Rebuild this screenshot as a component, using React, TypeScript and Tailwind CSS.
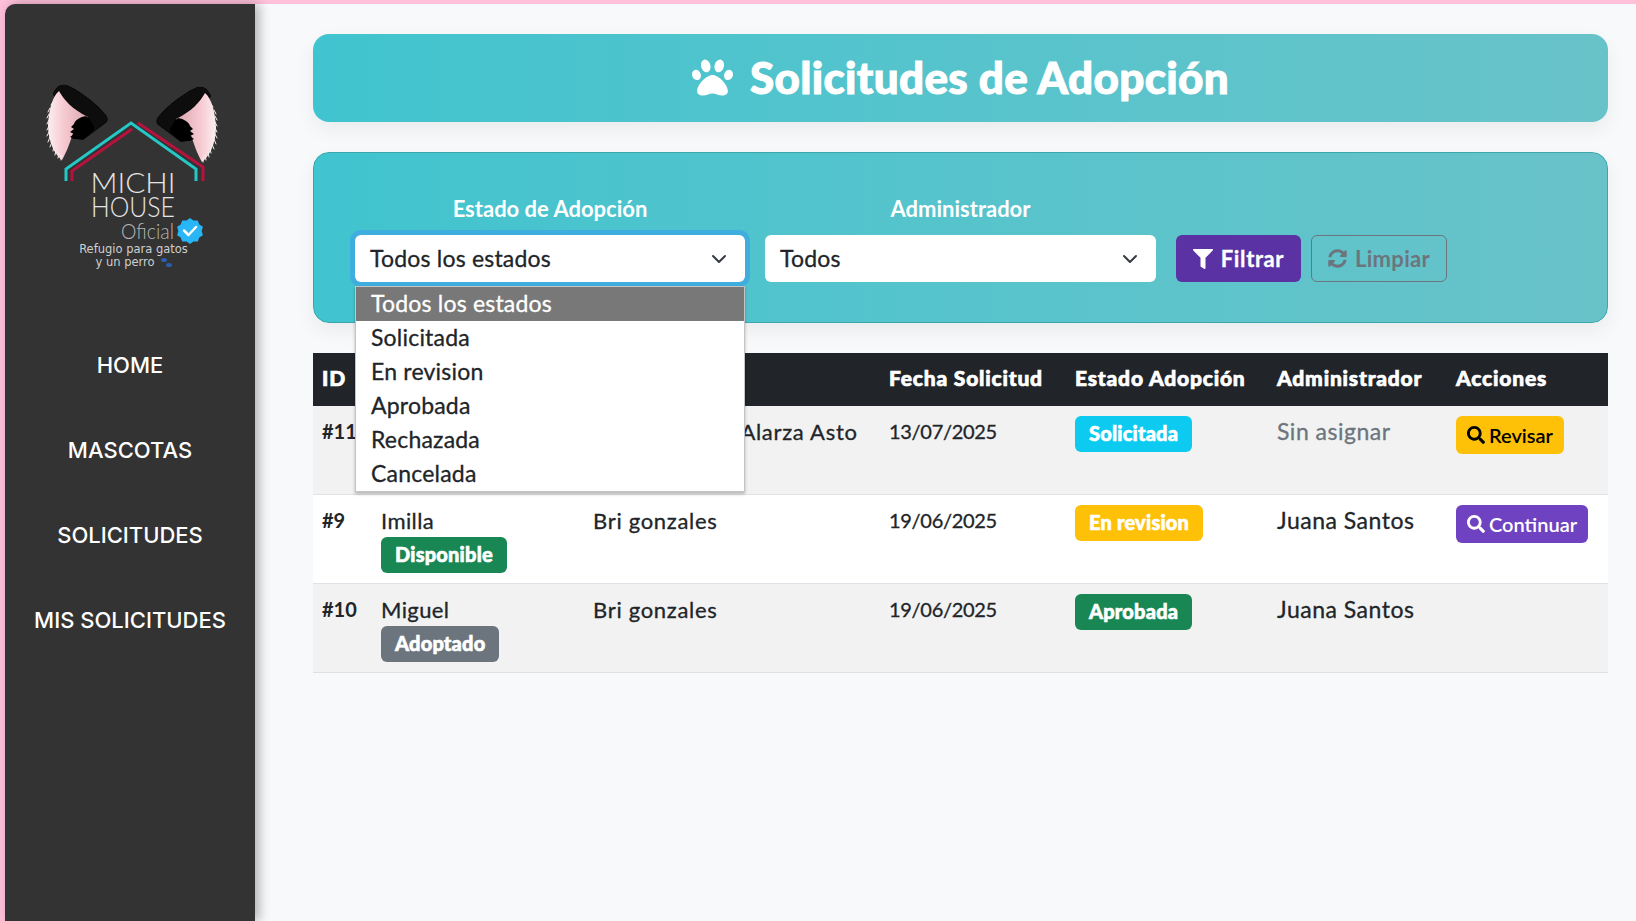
import { FaPaw, FaFilter, FaSyncAlt, FaSearch } from "react-icons/fa";

const navItems = ["HOME", "MASCOTAS", "SOLICITUDES", "MIS SOLICITUDES"];
const estados = ["Todos los estados", "Solicitada", "En revision", "Aprobada", "Rechazada", "Cancelada"];

// short hairs along the outer edge of the cat ear
const furLines = [
    [50, 108, 48, 112], [49, 114, 47, 118], [49, 120, 47, 124], [49, 126, 47, 130], [49, 132, 47, 136],
    [50, 137, 48, 142], [52, 142, 50, 147], [54, 146, 53, 151], [56, 150, 55, 155], [59, 153, 58, 158],
    [61, 155, 61, 160], [53, 102, 51, 105],
];

const Chevron = () => (
    <svg viewBox="0 0 16 16" className="w-4 h-4" fill="none" stroke="#343a40" strokeWidth="2" strokeLinecap="round" strokeLinejoin="round">
        <path d="m2 5 6 6 6-6" />
    </svg>
);

const Ear = () => (
    <g filter="url(#soft)">
        <path d="M53 94C56 86 62 83 69 86C82 92 98 105 106 115C109 119 108 122 103 125L83 140L70 138L60 110Z" fill="#070707" />
        <path d="M48 125C49 110 52 97 59 91C64 100 72 109 88 117L78 122L72 136C69 146 65 155 62 160C55 155 48 142 48 125Z" fill="url(#earPink)" />
        <g stroke="#f7f1f2" strokeWidth="1" strokeLinecap="round">
            {furLines.map(([x1, y1, x2, y2]) => (
                <line key={`${x1}-${y1}`} x1={x1} y1={y1} x2={x2} y2={y2} />
            ))}
        </g>
        <path d="M86 116C80 117 75 120 74 124L71 127L74 129L70 132L74 134L70 137L75 139L84 139L94 129C92 124 90 120 86 116Z" fill="#050505" />
    </g>
);

const Logo = () => (
    <svg viewBox="0 0 250 319" className="w-[250px] h-[319px] block" fill="none">
        <defs>
            <linearGradient id="earPink" x1="0" x2="1" y1="0" y2="0">
                <stop offset="0" stopColor="#fbeef0" />
                <stop offset="0.4" stopColor="#f6c9d0" />
                <stop offset="1" stopColor="#d9a6ae" />
            </linearGradient>
            <filter id="soft">
                <feGaussianBlur stdDeviation="0.6" />
            </filter>
        </defs>
        <g transform="translate(-5 -4)">
            <Ear />
            <g transform="translate(264 2) scale(-1 1)">
                <Ear />
            </g>
            <path d="M72 181V171L132 129" stroke="#b5123e" strokeWidth="3" />
            <path d="M138 123L203 167V181" stroke="#b5123e" strokeWidth="3" />
            <path d="M66 181V169L131 123L196 169V181" stroke="#25c8c6" strokeWidth="3" />
            <text x="133" y="193" textAnchor="middle" fill="#e5e5e5" fontSize="28" fontWeight="300" fontFamily="Lato, sans-serif" textLength="85" lengthAdjust="spacingAndGlyphs">MICHI</text>
            <text x="133" y="217" textAnchor="middle" fill="#e5e5e5" fontSize="28" fontWeight="300" fontFamily="Lato, sans-serif" textLength="84" lengthAdjust="spacingAndGlyphs">HOUSE</text>
            <text x="174" y="239" textAnchor="end" fill="#b5b5b5" fontSize="22" fontWeight="300" fontFamily="Lato, sans-serif" textLength="53" lengthAdjust="spacingAndGlyphs">Oficial</text>
            <path d="M190 218l3.5 2.6 4.3-.2 1.5 4 3.6 2.4-1.2 4.2 1.2 4.2-3.6 2.4-1.5 4-4.3-.2-3.500 2.600-3.500-2.600-4.300.2-1.500-4-3.600-2.400 1.200-4.200-1.200-4.200 3.600-2.400 1.500-4 4.300.2z" fill="#29b6f6" />
            <path d="M184 230.500l4.500 4.500 7.500-8" stroke="#fff" strokeWidth="2.500" strokeLinecap="round" strokeLinejoin="round" />
            <text x="133.500" y="253" textAnchor="middle" fill="#cfcfcf" fontSize="11.500" fontFamily="'DejaVu Sans', sans-serif">Refugio para gatos</text>
            <text x="125" y="266" fill="#cfcfcf" textAnchor="middle" fontSize="11.500" fontFamily="'DejaVu Sans', sans-serif">y un perro</text>
            <g fill="#2a5db0">
                <ellipse cx="164" cy="260" rx="3" ry="2" />
                <ellipse cx="169" cy="265" rx="3" ry="2" />
            </g>
        </g>
    </svg>
);

const Sidebar = () => (
    <aside className="w-[250px] shrink-0 bg-[#333333] rounded-tl-[10px] shadow-[4px_0_12px_rgba(0,0,0,0.3)] z-10">
        <Logo />
        <nav className="flex flex-col">
            {navItems.map((item) => (
                <a key={item} className="h-[85px] flex items-center justify-center text-white text-[22px] font-medium font-['Inter',sans-serif]">
                    {item}
                </a>
            ))}
        </nav>
    </aside>
);

const FakeSelect = ({ value, focused }: { value: string; focused?: boolean }) => (
    <div className={`h-[47px] bg-white rounded-md flex items-center justify-between pl-[15px] pr-[18px] text-[23px] tracking-[0.2px] [-webkit-text-stroke:0.3px_currentColor] text-[#212529] ${focused ? "shadow-[0_0_0_5px_#3fadde]" : ""}`}>
        <span>{value}</span>
        <Chevron />
    </div>
);

const FilterCard = () => (
    <section className="relative mt-[30px] rounded-2xl border border-[#3ba7ad] bg-gradient-to-r from-[#40c4cf] to-[#68c3c9] pt-[39px] pb-[40px] pl-[41px] shadow-[0_8px_20px_rgba(0,0,0,0.06)]">
        <div className="flex items-end">
            <div className="w-[390px] mr-[20px]">
                <label className="block text-center text-white text-[22px] font-bold mb-[10px] leading-[33px]">Estado de Adopción</label>
                <FakeSelect value="Todos los estados" focused />
            </div>
            <div className="w-[391px] mr-[20px]">
                <label className="block text-center text-white text-[22px] font-bold mb-[10px] leading-[33px]">Administrador</label>
                <FakeSelect value="Todos" />
            </div>
            <button className="h-[47px] w-[125px] mr-[10px] rounded-md bg-[#5a32a3] text-white text-[22px] font-bold tracking-[0.6px] [-webkit-text-stroke:0.3px_currentColor] flex items-center justify-center gap-2">
                <FaFilter className="text-[20px]" /> Filtrar
            </button>
            <button className="h-[47px] w-[136px] rounded-md border border-[#6c757d] text-[#6c757d] text-[22px] font-bold tracking-[0.3px] flex items-center justify-center gap-2">
                <FaSyncAlt className="text-[19px]" /> Limpiar
            </button>
        </div>

        {/* Open dropdown list lies over the card and the table */}
        <ul className="absolute left-[41px] top-[133px] w-[390px] bg-white border border-[#c4c4c4] shadow-[0_2px_3px_rgba(0,0,0,0.25)] z-20 text-[23px] tracking-[0.2px] [-webkit-text-stroke:0.3px_currentColor] text-[#212529]">
            {estados.map((estado, i) => (
                <li key={estado} className={`h-[34px] pl-[15px] pb-[2px] flex items-center ${i === 0 ? "bg-[#787878] text-white" : ""}`}>
                    {estado}
                </li>
            ))}
        </ul>
    </section>
);

const Badge = ({ label, color }: { label: string; color: string }) => (
    <span className={`inline-flex items-center h-[36px] px-[14px] pb-[2px] rounded-md text-white text-[20px] font-black tracking-[0.2px] [-webkit-text-stroke:0.6px_currentColor] ${color}`}>{label}</span>
);

const rows = [
    { id: "#11", applicant: "Ana Lucía Paz Alarza Asto", date: "13/07/2025", status: "Solicitada", statusColor: "bg-[#0dcaf0]", admin: "Sin asignar", action: "Revisar" },
    { id: "#9", pet: "Imilla", petStatus: "Disponible", petColor: "bg-[#198754]", applicant: "Bri gonzales", date: "19/06/2025", status: "En revision", statusColor: "bg-[#ffc107]", admin: "Juana Santos", action: "Continuar" },
    { id: "#10", pet: "Miguel", petStatus: "Adoptado", petColor: "bg-[#6c757d]", applicant: "Bri gonzales", date: "19/06/2025", status: "Aprobada", statusColor: "bg-[#198754]", admin: "Juana Santos" },
];

const headers = ["ID", "Mascota", "Solicitante", "Fecha Solicitud", "Estado Adopción", "Administrador", "Acciones"];
const widths = ["w-[59px]", "w-[212px]", "w-[296px]", "w-[186px]", "w-[202px]", "w-[179px]", "w-[161px]"];

const RequestsTable = () => (
    <table className="mt-[30px] w-full table-fixed border-collapse text-[22px] text-[#212529]">
        <thead>
            <tr className="h-[53px] bg-[#212529] text-white text-left">
                {headers.map((header, i) => (
                    <th key={header} className={`px-[9px] pb-[3px] text-[21px] font-black tracking-[0.8px] [-webkit-text-stroke:0.7px_currentColor] whitespace-nowrap ${widths[i]}`}>{header}</th>
                ))}
            </tr>
        </thead>
        <tbody>
            {rows.map((row, i) => (
                <tr key={row.id} className={`h-[88.700px] border-b border-[#dee2e6] align-top ${i % 2 === 0 ? "bg-[#f2f2f2]" : "bg-white"}`}>
                    <td className="px-[9px] pt-[9px] text-[20px] font-bold leading-[33px]">{row.id}</td>
                    <td className="px-[9px] pt-[9px] tracking-[0.4px] [-webkit-text-stroke:0.3px_currentColor]">
                        <div className="leading-[33px]">{row.pet}</div>
                        {row.petStatus && <Badge label={row.petStatus} color={row.petColor} />}
                    </td>
                    <td className="px-[9px] pt-[9px] tracking-[0.7px] [-webkit-text-stroke:0.3px_currentColor] whitespace-nowrap leading-[33px]">{row.applicant}</td>
                    <td className="px-[9px] pt-[9px] text-[20px] tracking-[-0.3px] [-webkit-text-stroke:0.3px_currentColor] leading-[33px]">{row.date}</td>
                    <td className="px-[9px] pt-[10px]">
                        <Badge label={row.status} color={row.statusColor} />
                    </td>
                    <td className={`px-[9px] pt-[9px] text-[23px] tracking-[0.5px] [-webkit-text-stroke:0.3px_currentColor] leading-[33px] ${row.admin === "Sin asignar" ? "text-[#6c757d]" : ""}`}>{row.admin}</td>
                    <td className="px-[9px] pt-[10px]">
                        {row.action && (
                            <button className={`h-[38px] px-[11px] rounded-md inline-flex items-center gap-1 text-[20px] font-semibold ${row.action === "Revisar" ? "bg-[#ffc107] text-black" : "bg-[#6f42c1] text-white"}`}>
                                <FaSearch className="text-[18px]" /> {row.action}
                            </button>
                        )}
                    </td>
                </tr>
            ))}
        </tbody>
    </table>
);

export default function App() {
    return (
        <div className="h-screen overflow-hidden bg-[#ffc0d9] pt-[4px] pl-[5px] flex font-['Lato',sans-serif]">
            <Sidebar />
            <main className="flex-1 bg-[#f8f9fa] pt-[30px] pl-[58px] pr-[28px]">
                <header className="h-[88px] pb-[2px] rounded-2xl bg-gradient-to-r from-[#40c4cf] to-[#68c3c9] flex items-center justify-center gap-[17px] text-white shadow-[0_8px_20px_rgba(0,0,0,0.06)]">
                    <FaPaw className="text-[41px]" />
                    <h1 className="text-[44px] font-black tracking-[0.3px] [-webkit-text-stroke:1px_currentColor]">Solicitudes de Adopción</h1>
                </header>
                <FilterCard />
                <RequestsTable />
            </main>
        </div>
    );
}
